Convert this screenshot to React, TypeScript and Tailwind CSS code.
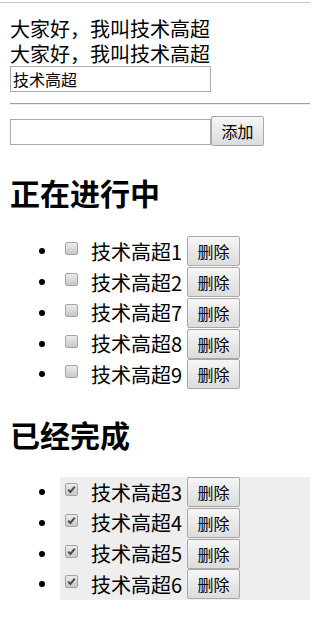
import React from "react";

const font = { fontFamily: '"Noto Sans CJK SC", "Noto Sans", sans-serif' };

type Todo = { id: number; title: string; done: boolean };

const todos: Todo[] = [
  { id: 1, title: "技术高超1", done: false },
  { id: 2, title: "技术高超2", done: false },
  { id: 7, title: "技术高超7", done: false },
  { id: 8, title: "技术高超8", done: false },
  { id: 9, title: "技术高超9", done: false },
  { id: 3, title: "技术高超3", done: true },
  { id: 4, title: "技术高超4", done: true },
  { id: 5, title: "技术高超5", done: true },
  { id: 6, title: "技术高超6", done: true },
];

const Box = ({ checked }: { checked: boolean }) => (
  <span className="ml-[5px] mb-[5px] flex h-[13px] w-[13px] shrink-0 items-center justify-center rounded-[2px] border border-[#a4a4a4] bg-gradient-to-b from-[#ececec] to-[#c8c8c8]">
    {checked && (
      <svg width="11" height="11" viewBox="0 0 11 11">
        <path d="M2.2 5.6 L4.4 7.9 L8.8 2.6" fill="none" stroke="#4a4a4a" strokeWidth="2" />
      </svg>
    )}
  </span>
);

const Row = ({ todo }: { todo: Todo }) => (
  <li className={`flex h-[30.75px] items-center ${todo.done ? "bg-[#eeeeee]" : ""}`}>
    <span className="absolute ml-[-21px] h-[6px] w-[6px] rounded-full bg-black" />
    <Box checked={todo.done} />
    <span className="ml-[13px] w-[96px] text-[20px] leading-[25px]">{todo.title}</span>
    <button className="h-[30px] w-[53px] rounded-[2px] border border-[#a8a8a8] bg-gradient-to-b from-[#f6f6f6] to-[#dcdcdc] text-[16px] leading-none text-black">
      删除
    </button>
  </li>
);

export default function App() {
  const doing = todos.filter((t) => !t.done);
  const done = todos.filter((t) => t.done);

  return (
    <div style={font} className="min-h-[640px] w-[310px] overflow-hidden bg-white text-black">
      <div className="mt-[2px] h-px bg-[#c8c8c8]" />
      <div className="pl-[10px] pt-[13px]">
        <p className="text-[20px] leading-[25px]">大家好，我叫技术高超</p>
        <p className="text-[20px] leading-[25px]">大家好，我叫技术高超</p>
        <input
          defaultValue="技术高超"
          style={font}
          className="block h-[26px] w-[201px] border border-[#a9a9a9] px-[2px] text-[16px] outline-none"
        />
        <div className="mt-[11px] h-[2px] border-t border-b border-t-[#a0a0a0] border-b-[#ececec]" />
        <div className="mt-[11px] flex items-end">
          <input style={font} className="mb-px block h-[26px] w-[201px] border border-[#a9a9a9] outline-none" />
          <button className="h-[30px] w-[53px] rounded-[2px] border border-[#a8a8a8] bg-gradient-to-b from-[#f6f6f6] to-[#dcdcdc] text-[16px] leading-none">
            添加
          </button>
        </div>

        <h2 className="mt-[28px] text-[30px] font-bold leading-[36px]">正在进行中</h2>
        <ul className="relative mt-[26px] pl-[50px]">
          {doing.map((t) => (
            <Row key={t.id} todo={t} />
          ))}
        </ul>

        <h2 className="mt-[26px] text-[30px] font-bold leading-[36px]">已经完成</h2>
        <ul className="mt-[25px] pl-[50px]">
          {done.map((t) => (
            <Row key={t.id} todo={t} />
          ))}
        </ul>
      </div>
    </div>
  );
}
